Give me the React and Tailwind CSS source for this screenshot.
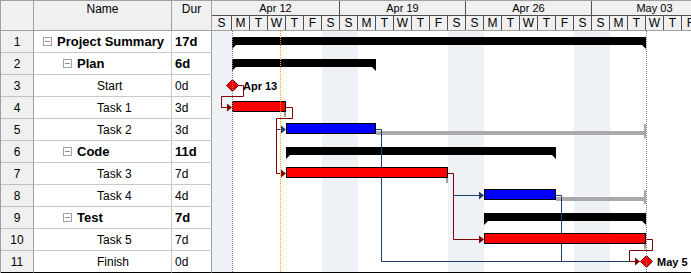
import React from 'react';

const ROWS = [
  { name: 'Project Summary', dur: '17d', level: 0, summary: true },
  { name: 'Plan', dur: '6d', level: 1, summary: true },
  { name: 'Start', dur: '0d' },
  { name: 'Task 1', dur: '3d' },
  { name: 'Task 2', dur: '3d' },
  { name: 'Code', dur: '11d', level: 1, summary: true },
  { name: 'Task 3', dur: '7d' },
  { name: 'Task 4', dur: '4d' },
  { name: 'Test', dur: '7d', level: 1, summary: true },
  { name: 'Task 5', dur: '7d' },
  { name: 'Finish', dur: '0d' },
];

const WEEKS = [
  { label: 'Apr 12', w: 'w-[128px]' },
  { label: 'Apr 19', w: 'w-[126px]' },
  { label: 'Apr 26', w: 'w-[126px]' },
  { label: 'May 03', w: 'w-[126px]' },
];

const LETTERS = ['S', 'M', 'T', 'W', 'T', 'F', 'S'];

// row line above row i (1-based), page coords
const T = (i) => 30 + 22 * (i - 1);

const RED = '#800000';
const NAVY = '#1f3d6b';

function CollapseBox() {
  return (
    <span className="relative w-[9px] h-[9px] shrink-0 border border-[#a0a0a0] bg-white mr-[5px]">
      <span className="absolute left-[1px] right-[1px] top-[3px] h-px bg-[#909090]" />
    </span>
  );
}

function TableRow({ row, index, last }) {
  const line = last ? 'border-b-black' : '';
  const indent = row.summary ? (row.level === 0 ? 'pl-[9px]' : 'pl-[29px]') : 'pl-[63px]';
  return (
    <div className="flex h-[22px]">
      <div className={`w-[33px] shrink-0 flex items-center justify-center bg-[#f0f0f0] border-r border-b border-r-[#a0a0a0] border-b-[#c0c0c0] ${line}`}>
        {index + 1}
      </div>
      <div className={`w-[138px] shrink-0 flex items-center border-r border-b border-[#c8c8c8] whitespace-nowrap ${indent} ${line}`}>
        {row.summary && <CollapseBox />}
        <span className={row.summary ? 'font-bold text-[13px]' : ''}>{row.name}</span>
      </div>
      <div className={`w-[40px] shrink-0 flex items-center pl-[3px] border-r border-b border-r-[#a0a0a0] border-b-[#c8c8c8] ${row.summary ? 'font-bold text-[13px]' : ''} ${line}`}>
        {row.dur}
      </div>
    </div>
  );
}

function Summary({ x1, x2, t }) {
  return (
    <g fill="#000">
      <rect x={x1} y={t + 7} width={x2 - x1} height={8} />
      <polygon points={`${x1},${t + 15} ${x1 + 4},${t + 15} ${x1},${t + 19}`} />
      <polygon points={`${x2 - 4},${t + 15} ${x2},${t + 15} ${x2},${t + 19}`} />
    </g>
  );
}

function Bar({ x1, x2, t, color, tick }) {
  return (
    <g>
      <rect x={x1 + 0.5} y={t + 5.5} width={x2 - x1 - 1} height={10} fill={color} stroke="#000" />
      {tick && <rect x={x2 - 2} y={t + 16} width={2} height={5} fill="#a0a0a0" />}
    </g>
  );
}

function Slack({ x1, t }) {
  return (
    <g fill="#aaaaaa">
      <rect x={x1} y={t + 13} width={646 - x1} height={4} />
      <rect x={644} y={t + 6} width={2} height={14} />
    </g>
  );
}

function Arrow({ x, y, color }) {
  return <polygon points={`${x - 5},${y - 4} ${x},${y} ${x - 5},${y + 4}`} fill={color} />;
}

function Diamond({ cx, cy }) {
  return (
    <polygon
      points={`${cx - 6},${cy} ${cx},${cy - 6} ${cx + 6},${cy} ${cx},${cy + 6}`}
      fill="#ff0000"
      stroke={RED}
    />
  );
}

function ChartBody() {
  return (
    <svg width="479" height="241" viewBox="212 31 479 241" className="block">
      <rect x="212" y="31" width="479" height="241" fill="#fff" />
      {/* weekends */}
      <rect x="212" y="31" width="20" height="241" fill="#eef1f6" />
      <rect x="322" y="31" width="36" height="241" fill="#eef1f6" />
      <rect x="448" y="31" width="36" height="241" fill="#eef1f6" />
      <rect x="574" y="31" width="36" height="241" fill="#eef1f6" />

      {/* summaries */}
      <Summary x1={232} x2={646} t={T(1)} />
      <Summary x1={232} x2={376} t={T(2)} />
      <Summary x1={286} x2={556} t={T(6)} />
      <Summary x1={484} x2={646} t={T(9)} />

      {/* slack */}
      <Slack x1={376} t={T(5)} />
      <Slack x1={556} t={T(8)} />

      {/* links, non critical */}
      <g fill="none" stroke={NAVY}>
        <path d="M276.5 129.5 H282" />
        <path d="M376 129.5 H381.5 V261.5 H635" />
        <path d="M453.5 195.5 H480" />
        <path d="M556 195.5 H561.5 V261.5" />
      </g>
      <Arrow x={286} y={129.5} color={NAVY} />
      <Arrow x={484} y={195.5} color={NAVY} />

      {/* links, critical */}
      <g fill="none" stroke={RED}>
        <path d="M238 85.5 H243.5 V96.5 H221.5 V107.5 H228" />
        <path d="M286 107.5 H292.5 V118.5 H276.5 V173.5 H282" />
        <path d="M448 173.5 H453.5 V239.5 H480" />
        <path d="M646 239.5 H652.5 V250.5 H629.5 V261.5 H636" />
      </g>
      <Arrow x={232} y={107.5} color={RED} />
      <Arrow x={286} y={173.5} color={RED} />
      <Arrow x={484} y={239.5} color={RED} />
      <Arrow x={640} y={261.5} color={RED} />

      {/* tasks */}
      <Bar x1={232} x2={286} t={T(4)} color="#ff0000" tick />
      <Bar x1={286} x2={376} t={T(5)} color="#0000ff" />
      <Bar x1={286} x2={448} t={T(7)} color="#ff0000" tick />
      <Bar x1={484} x2={556} t={T(8)} color="#0000ff" />
      <Bar x1={484} x2={646} t={T(10)} color="#ff0000" tick />

      {/* milestones */}
      <Diamond cx={232.5} cy={85.5} />
      <Diamond cx={646.5} cy={261.5} />
      <text x="243" y="89.5" fontSize="11" fontWeight="bold" fontFamily="Liberation Sans, Arial, sans-serif">Apr 13</text>
      <text x="657" y="265.5" fontSize="11" fontWeight="bold" fontFamily="Liberation Sans, Arial, sans-serif">May 5</text>

      {/* date markers */}
      <line x1="232.5" y1="31" x2="232.5" y2="272" stroke="#808080" strokeDasharray="1 1" />
      <line x1="280.5" y1="31" x2="280.5" y2="272" stroke="#ffa500" strokeDasharray="1 1" />
      <line x1="646.5" y1="31" x2="646.5" y2="272" stroke="#808080" strokeDasharray="1 1" />
    </svg>
  );
}

export default function App() {
  const days = Array.from({ length: 27 }, (_, i) => LETTERS[i % 7]);

  return (
    <div className="w-[691px] h-[273px] overflow-hidden bg-white flex border-t border-l border-[#a0a0a0] text-[12px] text-black font-['Liberation_Sans',Arial,sans-serif]">
      {/* grid */}
      <div className="w-[211px] shrink-0 flex flex-col">
        <div className="flex h-[30px] bg-[#f0f0f0] border-b border-[#a0a0a0]">
          <div className="w-[33px] shrink-0 border-r border-[#a0a0a0]" />
          <div className="w-[138px] shrink-0 border-r border-[#a0a0a0] text-center leading-[14px] pt-px">Name</div>
          <div className="w-[40px] shrink-0 border-r border-[#a0a0a0] text-center leading-[14px] pt-px">Dur</div>
        </div>
        {ROWS.map((row, i) => (
          <TableRow key={i} row={row} index={i} last={i === ROWS.length - 1} />
        ))}
      </div>

      {/* chart */}
      <div className="w-[479px] shrink-0 flex flex-col overflow-hidden">
        <div className="flex h-[15px] bg-[#f0f0f0] border-b border-[#505050] text-[11px] leading-[14px]">
          {WEEKS.map((w) => (
            <div key={w.label} className={`${w.w} shrink-0 text-center border-r border-[#505050]`}>
              {w.label}
            </div>
          ))}
        </div>
        <div className="flex h-[15px] bg-[#f0f0f0] border-b border-[#a0a0a0] leading-[14px]">
          {days.map((d, i) => (
            <div
              key={i}
              className={`${i === 0 ? 'w-[20px]' : 'w-[18px]'} shrink-0 text-center border-r border-[#505050]`}
            >
              {d}
            </div>
          ))}
        </div>
        <div className="border-b border-black">
          <ChartBody />
        </div>
      </div>
    </div>
  );
}
